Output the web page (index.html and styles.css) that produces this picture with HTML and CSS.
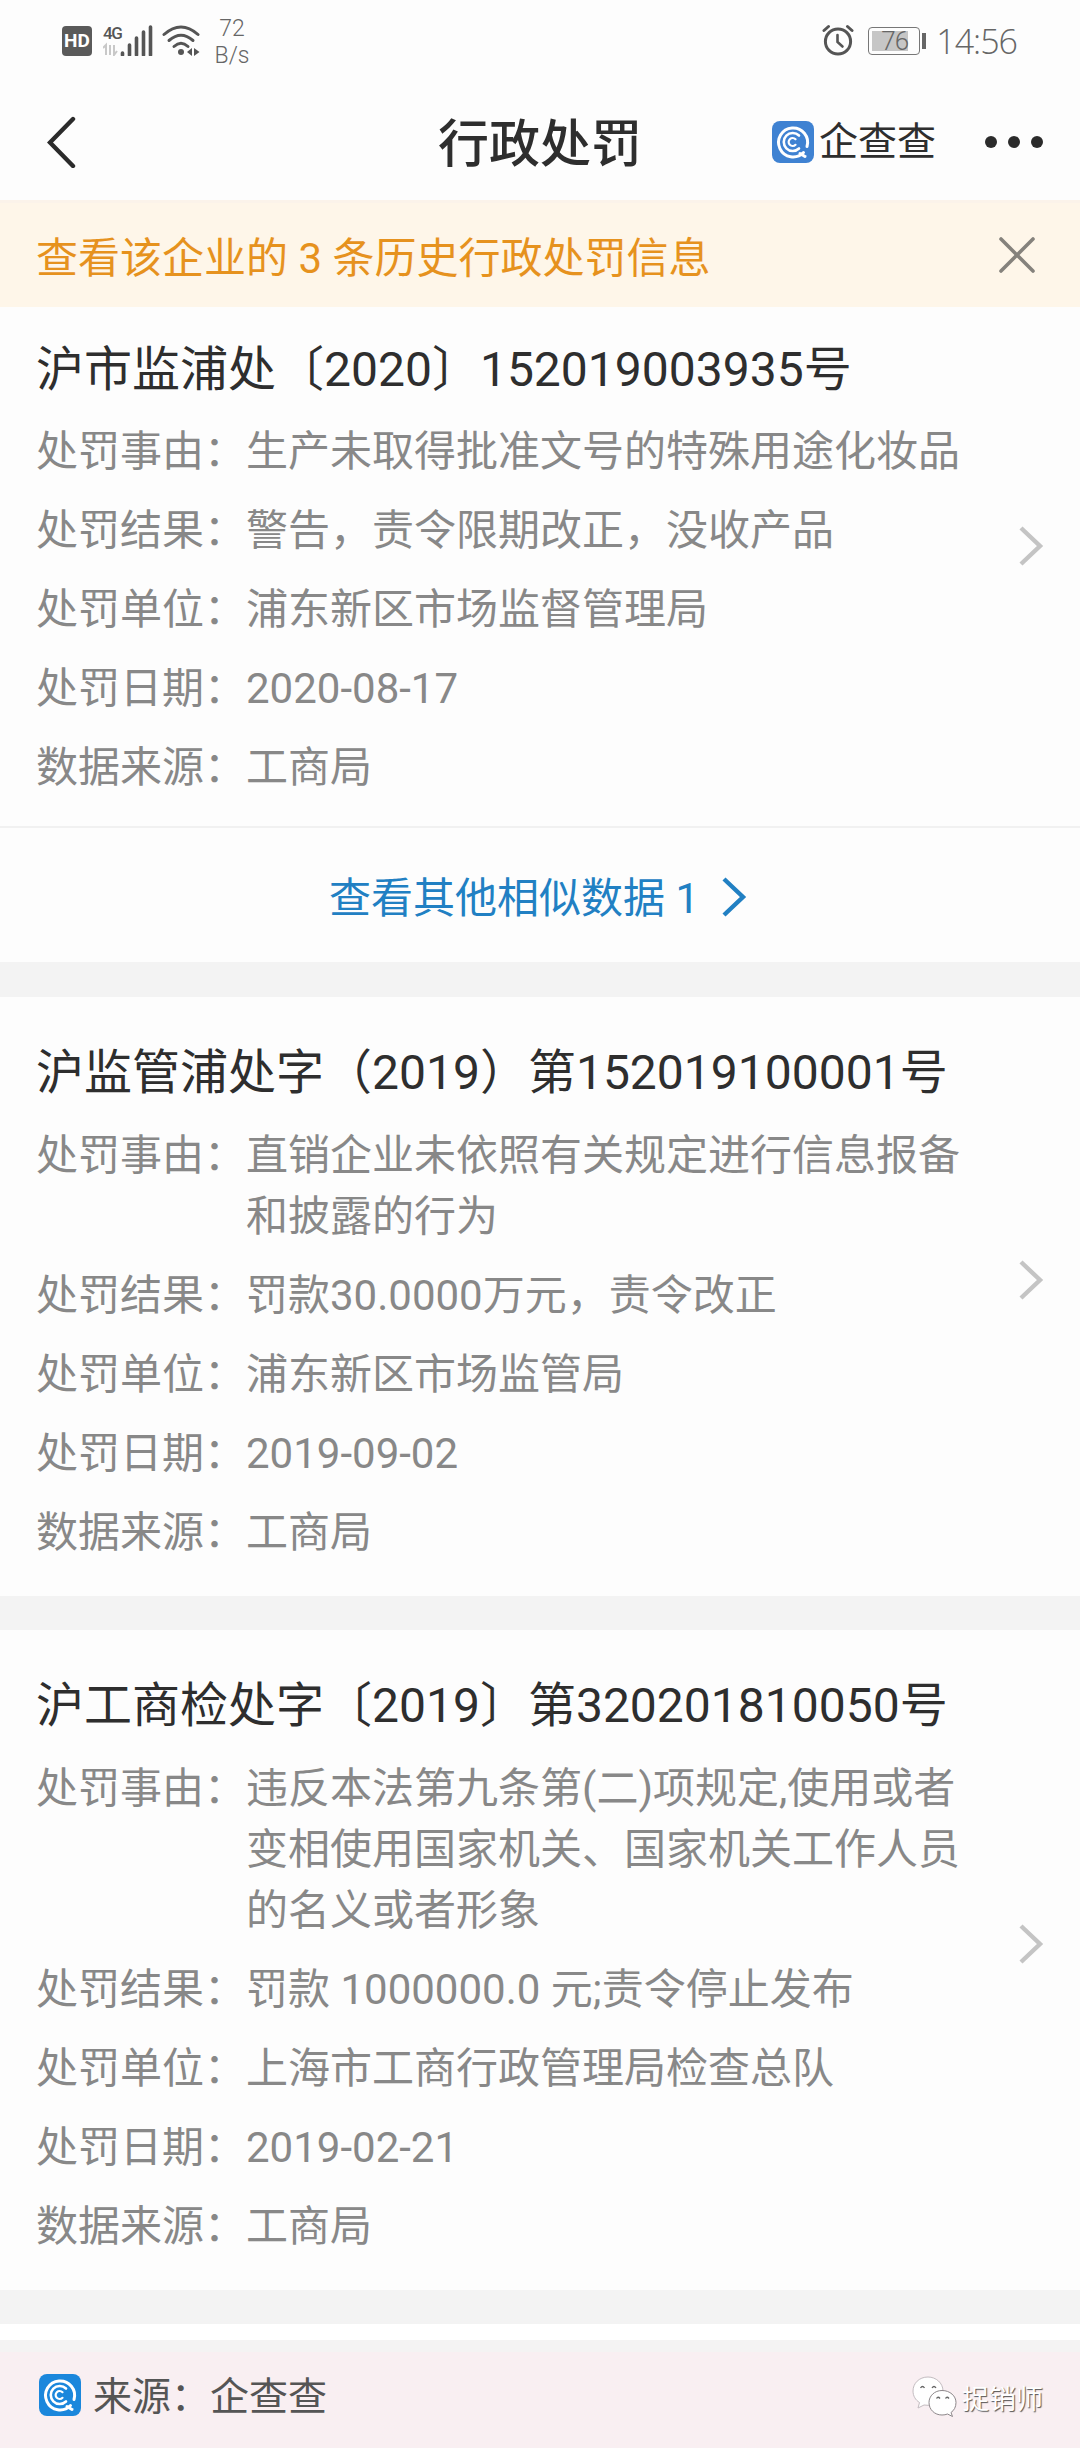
FILE: index.html
```html
<!DOCTYPE html>
<html lang="zh-CN">
<head>
    <meta charset="UTF-8">
    <meta name="viewport" content="width=device-width, initial-scale=1.0">
    <title>行政处罚</title>
    <link rel="stylesheet" href="styles.css">
</head>
<body>
    <svg class="defs" width="0" height="0">
        <symbol id="logo" viewBox="0 0 42 42">
            <rect width="42" height="42" rx="8" fill="currentColor"/>
            <g fill="none" stroke="#fff" stroke-linecap="round">
                <path d="M31.5 31.5A14.5 14.5 0 1 1 35 25.5" stroke-width="3"/>
                <path d="M28 32.5L33 35.5" stroke-width="3"/>
                <path d="M27 27.5A9 9 0 1 1 27 14.5" stroke-width="2.6"/>
                <path d="M23.5 23.8A4 4 0 1 1 23.5 18.2" stroke-width="2.2"/>
            </g>
        </symbol>
        <symbol id="chevron" viewBox="0 0 26 40">
            <path d="M3 2L22 20L3 38" fill="none" stroke="currentColor" stroke-width="4.4"/>
        </symbol>
    </svg>

    <div class="status-bar">
        <div class="status-left">
            <span class="hd">HD</span>
            <span class="signal">
                <span class="net">4G</span>
                <svg width="50" height="31" viewBox="0 0 50 31">
                    <path d="M3 30V20L0 23M7 20V30M11 20V30L14 26" fill="none" stroke="#c8c8c8" stroke-width="2"/>
                    <path d="M19.5 28V30M26.5 20V30M33.5 13V30M40.5 7V30M47.5 2V30" fill="none" stroke="#555" stroke-width="3.6" stroke-linecap="round"/>
                </svg>
            </span>
            <svg class="wifi" width="38" height="31" viewBox="0 0 38 31">
                <g fill="none" stroke="#555" stroke-width="3" stroke-linecap="round">
                    <path d="M2 9.5Q19 -5.5 36 9.5"/>
                    <path d="M7 15.5Q19 5 31 15.5"/>
                    <path d="M12 21.5Q19 15 26 21.5"/>
                </g>
                <circle cx="19" cy="27" r="3" fill="#555"/>
                <path d="M30 23V31L25 27ZM32 23V31L37.5 27Z" fill="#555"/>
            </svg>
            <span class="speed">72<br>B/s</span>
        </div>
        <div class="status-right">
            <svg width="32" height="32" viewBox="0 0 32 32" fill="none" stroke="#555" stroke-linecap="round">
                <circle cx="16" cy="17.5" r="12.6" stroke-width="3"/>
                <path d="M15.5 11V18L20.5 22.5" stroke-width="2.6"/>
                <path d="M2 6.5L6.5 2.5M30 6.5L25.5 2.5" stroke-width="3"/>
            </svg>
            <span class="battery"><span class="battery-level">76</span></span>
            <span class="clock">14:56</span>
        </div>
    </div>

    <header class="header">
        <svg class="back" width="30" height="52" viewBox="0 0 30 52">
            <path d="M26 3L3 26.5L26 50" fill="none" stroke="#2b2b2b" stroke-width="4.4" stroke-linecap="round"/>
        </svg>
        <h1>行政处罚</h1>
        <div class="header-right">
            <svg class="logo" width="42" height="42"><use href="#logo"/></svg>
            <span class="brand">企查查</span>
            <span class="more"><i></i><i></i><i></i></span>
        </div>
    </header>

    <div class="banner">
        <span>查看该企业的 3 条历史行政处罚信息</span>
        <svg width="36" height="36" viewBox="0 0 36 36">
            <path d="M2 2L34 34M34 2L2 34" stroke="#85827c" stroke-width="3.6" stroke-linecap="round"/>
        </svg>
    </div>

    <section class="card first">
        <div class="card-body">
            <h2>沪市监浦处〔2020〕152019003935号</h2>
            <dl>
                <dt>处罚事由：</dt><dd>生产未取得批准文号的特殊用途化妆品</dd>
                <dt>处罚结果：</dt><dd>警告，责令限期改正，没收产品</dd>
                <dt>处罚单位：</dt><dd>浦东新区市场监督管理局</dd>
                <dt>处罚日期：</dt><dd>2020-08-17</dd>
                <dt>数据来源：</dt><dd>工商局</dd>
            </dl>
        </div>
        <svg class="arrow" width="26" height="40"><use href="#chevron"/></svg>
    </section>
    <a class="similar">
        <span>查看其他相似数据 1</span>
        <svg width="26" height="40"><use href="#chevron"/></svg>
    </a>

    <section class="card">
        <div class="card-body">
            <h2>沪监管浦处字（2019）第152019100001号</h2>
            <dl>
                <dt>处罚事由：</dt><dd>直销企业未依照有关规定进行信息报备和披露的行为</dd>
                <dt>处罚结果：</dt><dd>罚款30.0000万元，责令改正</dd>
                <dt>处罚单位：</dt><dd>浦东新区市场监管局</dd>
                <dt>处罚日期：</dt><dd>2019-09-02</dd>
                <dt>数据来源：</dt><dd>工商局</dd>
            </dl>
        </div>
        <svg class="arrow" width="26" height="40"><use href="#chevron"/></svg>
    </section>

    <section class="card">
        <div class="card-body">
            <h2>沪工商检处字〔2019〕第320201810050号</h2>
            <dl>
                <dt>处罚事由：</dt><dd>违反本法第九条第(二)项规定,使用或者<br>变相使用国家机关、国家机关工作人员<br>的名义或者形象</dd>
                <dt>处罚结果：</dt><dd>罚款 1000000.0 元;责令停止发布</dd>
                <dt>处罚单位：</dt><dd>上海市工商行政管理局检查总队</dd>
                <dt>处罚日期：</dt><dd>2019-02-21</dd>
                <dt>数据来源：</dt><dd>工商局</dd>
            </dl>
        </div>
        <svg class="arrow" width="26" height="40"><use href="#chevron"/></svg>
    </section>

    <div class="next-card"></div>

    <footer class="footer">
        <svg class="logo" width="42" height="42"><use href="#logo"/></svg>
        <span class="source">来源：企查查</span>
        <div class="watermark">
            <svg width="46" height="42" viewBox="0 0 46 42" fill="#fff" stroke="#8d878a" stroke-width="1">
                <path d="M16 1C7 1 1 7.5 1 15C1 20 3.5 24 7.5 26.5L6 32L12 29C24 31 31 24 31 15C31 7 24 1 16 1Z" stroke="#c3bcc0"/>
                <path d="M30 14.5C22.5 14.5 17 20 17 26.5C17 33.5 22.5 39 30 39C32 39 34 38.7 35.5 38L40.5 40.5L39 36.5C42 34.5 44 31 44 26.5C44 20 38 14.5 30 14.5Z"/>
                <path d="M8.5 12Q10.5 9 12.5 12M20 12Q22 9 24 12M24.5 22.5Q26 20 28 22.5M33.5 22.5Q35 20 37 22.5" fill="none" stroke="#666" stroke-width="1.3"/>
            </svg>
            <span>捉销师</span>
        </div>
    </footer>
</body>
</html>
```
FILE: styles.css
```css
* {
    box-sizing: border-box;
    margin: 0;
    padding: 0;
}
body {
    width: 1080px;
    height: 2448px;
    overflow: hidden;
    font-family: Roboto, "Noto Sans CJK SC", sans-serif;
    background: #fdfdfd;
    color: #2e2e2e;
}
svg {
    display: block;
    flex: none;
}
.defs {
    position: absolute;
}

/* status bar */
.status-bar {
    display: flex;
    justify-content: space-between;
    height: 84px;
    padding: 0 63px 0 62px;
    color: #666;
}
.status-left,
.status-right {
    display: flex;
    align-items: flex-start;
}
.status-right {
    padding-top: 24px;
}
.hd {
    width: 30px;
    height: 30px;
    margin-top: 26px;
    border-radius: 4px;
    background: #5a5a5a;
    color: #fff;
    font-size: 19px;
    font-weight: 700;
    line-height: 30px;
    text-align: center;
}
.signal {
    display: grid;
    margin: 25px 0 0 11px;
}
.signal > * {
    grid-area: 1 / 1;
}
.net {
    color: #555;
    font-size: 17px;
    font-weight: 500;
    line-height: 16px;
    letter-spacing: -1.5px;
}
.wifi {
    margin: 25px 0 0 9px;
}
.speed {
    width: 54px;
    margin: 15px 0 0 5px;
    font-size: 23px;
    font-weight: 300;
    line-height: 27px;
    text-align: center;
}
.battery {
    width: 52px;
    height: 28px;
    margin: 3px 0 0 14px;
    padding: 3px;
    border: 1.5px solid #777;
    border-radius: 4px;
}
.battery-level {
    display: block;
    width: 36px;
    height: 20px;
    padding-left: 9px;
    background: #c6c6c6;
    font-size: 26px;
    font-weight: 300;
    line-height: 20px;
    letter-spacing: -1px;
}
.battery::after {
    content: "";
    display: block;
    width: 4px;
    height: 16px;
    margin: -18px 0 0 50px;
    background: #666;
}
.clock {
    margin-left: 16px;
    font-family: "Open Sans", sans-serif;
    font-size: 34px;
    font-weight: 300;
    line-height: 34px;
    letter-spacing: -1px;
}

/* title bar */
.header {
    display: grid;
    grid-template-columns: 391px auto 1fr;
    align-items: center;
    height: 116px;
    padding: 0 37px 0 47px;
}
.header h1 {
    margin-top: 5px;
    font-size: 51px;
    font-weight: 500;
    line-height: 60px;
}
.header-right {
    display: flex;
    align-items: center;
    justify-content: flex-end;
}
.header .logo {
    color: #3f82d2;
}
.brand {
    margin-left: 5px;
    font-size: 39px;
    line-height: 44px;
}
.more {
    display: flex;
    gap: 11px;
    margin-left: 49px;
}
.more i {
    width: 12px;
    height: 12px;
    border-radius: 50%;
    background: #2b2b2b;
}

/* history notice */
.banner {
    display: flex;
    align-items: center;
    justify-content: space-between;
    height: 107px;
    padding: 0 45px 0 36px;
    border-top: 3px solid #fbf3ea;
    background: #fef6e9;
    color: #e6921e;
    font-size: 42px;
}
.banner span {
    margin-top: -2px;
}

/* penalty cards */
.card {
    display: flex;
    align-items: center;
    justify-content: space-between;
    padding: 46px 36px 33px 36px;
    border-bottom: 34px solid #f3f3f3;
}
.card.first {
    padding-top: 33px;
    padding-bottom: 28px;
    border-bottom: 2px solid #f1f1f1;
}
.card h2 {
    margin-bottom: 21px;
    font-size: 48px;
    font-weight: 400;
    line-height: 60px;
    white-space: nowrap;
}
.card dl {
    display: grid;
    grid-template-columns: 210px 714px;
    row-gap: 18px;
    color: #888;
    font-size: 42px;
    line-height: 61px;
}
.card:not(.first) h2 {
    margin-bottom: 22px;
}
.arrow {
    margin-bottom: 46px;
    color: #c4c4c4;
}
.similar {
    display: flex;
    align-items: center;
    justify-content: center;
    gap: 22px;
    height: 169px;
    padding-right: 4px;
    border-bottom: 35px solid #f3f3f3;
    color: #2180c3;
    font-size: 42px;
}
.similar span {
    margin-top: -2px;
}
.similar svg {
    margin-top: 3px;
}
.next-card {
    height: 16px;
    background: #fff;
}

/* bottom source strip */
.footer {
    display: flex;
    align-items: center;
    height: 110px;
    padding: 0 37px 12px 39px;
    border-top: 12px solid #f4f3f3;
    background: #f9eff2;
}
.footer .logo {
    color: #1b87dc;
}
.source {
    margin: -4px 0 0 12px;
    color: #555;
    font-size: 39px;
}
.watermark {
    display: flex;
    align-items: center;
    gap: 4px;
    margin: 4px 0 0 auto;
    color: #fff;
    font-size: 27px;
    text-shadow: 1px 1px 1px #555;
}
```
